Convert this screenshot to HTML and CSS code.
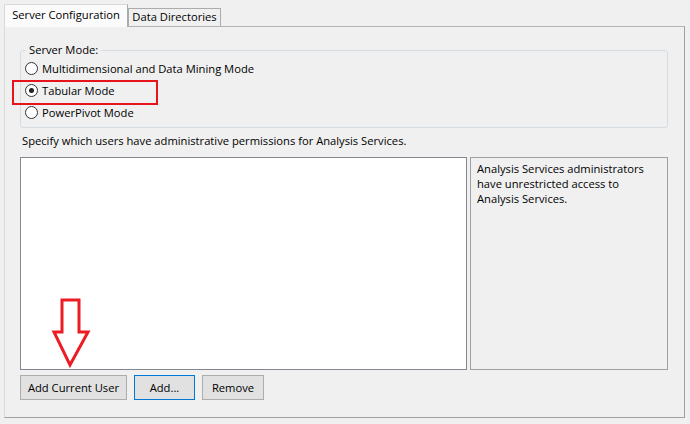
FILE: index.html
```html
<!DOCTYPE html>
<html lang="en">
<head>
    <meta charset="UTF-8">
    <meta name="viewport" content="width=device-width, initial-scale=1.0">
    <title>Analysis Services Configuration</title>
    <link rel="stylesheet" href="styles.css">
</head>
<body>
    <div class="dialog">
        <div class="tabstrip">
            <div class="tab active">Server Configuration</div>
            <div class="tab">Data Directories</div>
        </div>

        <div class="panel">
            <fieldset class="mode-group">
                <legend>Server Mode:</legend>
                <label class="radio"><span class="dot"></span>Multidimensional and Data Mining Mode</label>
                <label class="radio checked"><span class="dot"></span>Tabular Mode<span class="highlight"></span></label>
                <label class="radio"><span class="dot"></span>PowerPivot Mode</label>
            </fieldset>

            <p class="hint">Specify which users have administrative permissions for Analysis Services.</p>

            <div class="admin-row">
                <div class="user-list">
                    <!-- callout arrow pointing at the first button -->
                    <svg class="arrow" width="40" height="72" viewBox="0 0 40 72">
                        <polygon points="11,3 28,3 28,35 37,35 19,68 3,35 11,35" fill="none" stroke="#ed1c24" stroke-width="3" stroke-linejoin="miter"/>
                    </svg>
                </div>
                <div class="info-box">Analysis Services administrators have unrestricted access to Analysis Services.</div>
            </div>

            <div class="buttons">
                <button class="btn wide">Add Current User</button>
                <button class="btn default">Add...</button>
                <button class="btn remove">Remove</button>
            </div>
        </div>
    </div>
</body>
</html>
```

FILE: styles.css
```css
/* Windows-style setup dialog page */
* {
    box-sizing: border-box;
}

body {
    margin: 0;
    background-color: #f0f0f0;
    font-family: "Open Sans", "Noto Sans", sans-serif;
    font-size: 11.2px;
    color: #000;
}

.dialog {
    width: 690px;
    height: 424px;
    padding: 3px 5px 0 4px;
}

.tabstrip {
    display: flex;
    align-items: flex-end;
    height: 23px;
    position: relative;
    z-index: 1;
}

.tab {
    width: 93px;
    height: 18px;
    text-align: center;
    line-height: 16px;
    border: 1px solid #acacac;
    border-bottom: none;
    background-color: #f0f0f0;
}

.tab.active {
    width: 124px;
    height: 23px;
    line-height: 20px;
    background-color: #fbfbfb;
    border-color: #d9d9d9;
    border-right-color: #acacac;
    margin-bottom: -1px;
}

.panel {
    height: 392px;
    border: 1px solid #b4b4b4;
    border-left-color: #dadada;
    border-right-color: #a0a0a0;
    border-bottom-color: #a0a0a0;
    padding: 15px 16px 0 15px;
}

.mode-group {
    margin: 0;
    padding: 0 4px 1px 4px;
    border: 1px solid #d5dde3;
    border-radius: 3px;
    height: 86px;
}

.mode-group legend {
    padding: 0 3px;
    margin-left: 1px;
    line-height: 16px;
}

.radio {
    display: flex;
    align-items: center;
    height: 22px;
    position: relative;
    top: -1px;
}

.dot {
    width: 13px;
    height: 13px;
    border: 1px solid #333;
    border-radius: 50%;
    background-color: #fff;
    margin-right: 4px;
    display: flex;
    align-items: center;
    justify-content: center;
}

.radio.checked .dot::after {
    content: "";
    width: 5px;
    height: 5px;
    border-radius: 50%;
    background-color: #222;
}

.highlight {
    position: absolute;
    left: -13px;
    top: 1px;
    width: 146px;
    height: 25px;
    border: 2px solid #e8141c;
}

.hint {
    margin: 5px 2px 8px;
    line-height: 16px;
}

.admin-row {
    display: flex;
    gap: 3px;
    height: 213px;
}

.user-list {
    flex: 1;
    background-color: #fff;
    border: 1px solid #828790;
    position: relative;
}

.arrow {
    position: absolute;
    left: 30px;
    top: 139px;
}

.info-box {
    width: 198px;
    border: 1px solid #a0a0a0;
    padding: 3px 6px;
    line-height: 15px;
}

.buttons {
    display: flex;
    gap: 7px;
    margin-top: 5px;
}

.btn {
    height: 25px;
    padding: 0;
    font-family: inherit;
    font-size: 11.2px;
    color: #000;
    background-color: #e1e1e1;
    border: 1px solid #adadad;
}

.btn.wide {
    width: 107px;
}

.btn.default {
    width: 61px;
    border-color: #0078d7;
}

.btn.remove {
    width: 62px;
}
```
